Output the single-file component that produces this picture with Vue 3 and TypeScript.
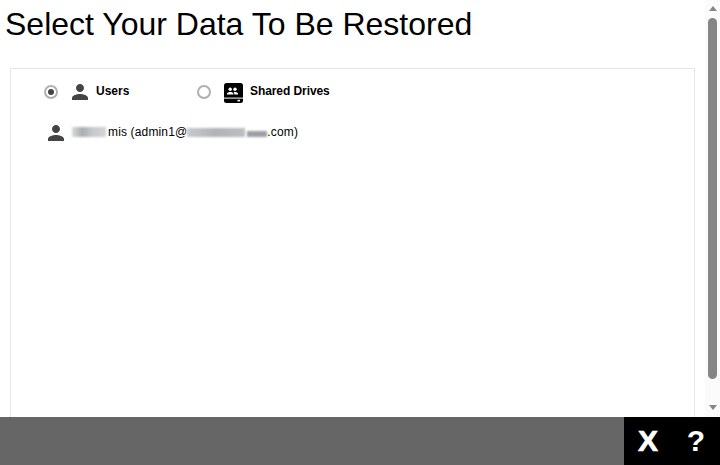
<script setup lang="ts">
const personPath =
  'M12 12c2.21 0 4-1.79 4-4s-1.79-4-4-4-4 1.79-4 4 1.79 4 4 4zm0 2c-2.67 0-8 1.34-8 4v2h16v-2c0-2.66-5.33-4-8-4z';
</script>

<template>
  <div class="page">
    <div class="content">
      <main class="main">
        <h1 class="title">Select Your Data To Be Restored</h1>
        <section class="panel">
          <div class="tabs">
            <label class="tab tab-users">
              <span class="radio checked"></span>
              <svg class="person" viewBox="0 0 24 24"><path :d="personPath" /></svg>
              <b>Users</b>
            </label>
            <label class="tab tab-drives">
              <span class="radio"></span>
              <svg class="drive" viewBox="0 0 19 20">
                <rect width="19" height="20" rx="2.5" fill="#000" />
                <rect x="0" y="14.6" width="19" height="1" fill="#fff" />
                <rect x="13.5" y="16.8" width="2.5" height="1.6" fill="#fff" />
                <circle cx="6.2" cy="6.3" r="1.7" fill="#fff" />
                <circle cx="11" cy="6.3" r="1.7" fill="#fff" />
                <path d="M3 11.6v-1c0-1 2-1.7 3.2-1.7s3.2.7 3.2 1.7v1zM10.3 11.6v-1c0-.7-.3-1.2-.7-1.6.5-.1 1-.1 1.4-.1 1.2 0 3 .7 3 1.7v1z" fill="#fff" />
              </svg>
              <b>Shared Drives</b>
            </label>
          </div>
          <div class="account">
            <svg class="person" viewBox="0 0 24 24"><path :d="personPath" /></svg>
            <span class="account-text">
              <span class="blur blur-name"></span>
              <span class="spaced">mis (admin1@</span><span class="blur blur-domain"></span><span class="blur blur-tld"></span><span class="spaced">.com)</span>
            </span>
          </div>
        </section>
      </main>
      <aside class="scrollbar">
        <span class="arrow up"></span>
        <span class="thumb"></span>
        <span class="arrow down"></span>
      </aside>
    </div>
    <footer class="footer">
      <div class="actions">
        <span class="action close">X</span>
        <span class="action">?</span>
      </div>
    </footer>
  </div>
</template>

<style scoped>
.page {
  width: 720px;
  height: 465px;
  display: flex;
  flex-direction: column;
  overflow: hidden;
  background: #fff;
  font-family: "Liberation Sans", Arial, sans-serif;
  color: #000;
}
.content {
  flex: 1;
  min-height: 0;
  display: flex;
}
.main {
  flex: 1;
  min-width: 0;
  overflow: hidden;
}
.title {
  margin: 0;
  padding: 6px 0 0 5px;
  font-size: 32px;
  font-weight: 400;
  line-height: 37px;
  height: 62px;
  box-sizing: border-box;
}
.panel {
  margin: 6px 0 0 10px;
  width: 685px;
  height: 400px;
  box-sizing: border-box;
  border: 1px solid #e6e6e6;
}
.tabs {
  display: flex;
  height: 22px;
  margin-top: 12px;
  padding-left: 33px;
}
.tab {
  display: flex;
  align-items: center;
  font-size: 12px;
}
.tab b {
  margin-bottom: 2px;
}
.tab-users {
  width: 153px;
}
.tab-drives b {
  letter-spacing: -0.08px;
}
.radio {
  width: 14px;
  height: 14px;
  box-sizing: border-box;
  border: 2px solid #b0b0b0;
  border-radius: 50%;
  display: flex;
  align-items: center;
  justify-content: center;
}
.radio.checked::after {
  content: "";
  width: 6px;
  height: 6px;
  border-radius: 50%;
  background: #444;
}
.person {
  width: 24px;
  height: 24px;
  flex: none;
  fill: #444;
}
.tab .person {
  margin-left: 10px;
  margin-right: 4px;
}
.drive {
  width: 19px;
  height: 20px;
  margin-left: 13px;
  margin-right: 7px;
  margin-top: 2px;
}
.account {
  display: flex;
  align-items: center;
  height: 24px;
  margin-top: 18px;
  padding-left: 33px;
  font-size: 12px;
}
.account-text {
  display: flex;
  align-items: center;
  margin-left: 4px;
  margin-bottom: 2px;
  white-space: pre;
}
.spaced {
  letter-spacing: 0.15px;
}
.blur {
  display: inline-block;
  height: 10px;
  filter: blur(1px);
}
.blur-name {
  width: 34px;
  margin-right: 2px;
  background: linear-gradient(90deg, #d8dadd, #a8aeb2 30%, #c6c8cc 60%, #d4d4d8);
}
.blur-domain {
  width: 58px;
  height: 9px;
  margin-right: 2px;
  background: linear-gradient(90deg, #c8cace, #b0b2b6 50%, #bcbec2);
}
.blur-tld {
  width: 20px;
  height: 6px;
  margin-top: 4px;
  background: #9c9ea2;
}
.scrollbar {
  flex: none;
  width: 15px;
  display: flex;
  flex-direction: column;
  align-items: center;
  background: #fbfbfb;
}
.arrow {
  width: 0;
  height: 0;
  border-left: 4px solid transparent;
  border-right: 4px solid transparent;
}
.arrow.up {
  margin-top: 6px;
  border-bottom: 5px solid #858585;
}
.arrow.down {
  margin-top: 26px;
  border-top: 5px solid #858585;
}
.thumb {
  width: 9px;
  height: 361px;
  margin-top: 7px;
  border-radius: 5px;
  background: #858585;
}
.footer {
  flex: none;
  height: 48px;
  background: #666;
  display: flex;
  justify-content: flex-end;
}
.actions {
  width: 96px;
  background: #000;
  display: flex;
  color: #fff;
  font-size: 30px;
  font-weight: 700;
}
.action {
  width: 48px;
  line-height: 48px;
  text-align: center;
}
.close {
  -webkit-text-stroke: 0.7px #fff;
}
</style>

<style>
html, body {
  margin: 0;
  overflow: hidden;
}
</style>
